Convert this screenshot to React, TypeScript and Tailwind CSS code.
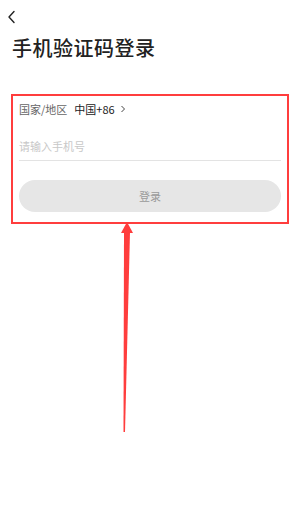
import React from 'react';

const App: React.FC = () => {
    return (
        <div
            className="relative w-[300px] h-[521px] bg-white overflow-hidden"
            style={{ fontFamily: '"Noto Sans CJK SC", "Noto Sans", sans-serif' }}
        >
            {/* Back */}
            <div className="h-[34px] pl-[7px] pt-[10px]">
                <svg width="9" height="14" viewBox="0 0 9 14" fill="none">
                    <path d="M7 1.5 L2 7 L7 12.5" stroke="#222" strokeWidth="1.4" strokeLinecap="round" strokeLinejoin="round" />
                </svg>
            </div>

            {/* Title */}
            <h1 className="pl-[12px] text-[20px] leading-[28px] font-medium text-[#222] tracking-[0.5px]">手机验证码登录</h1>

            {/* Form, highlighted */}
            <div className="mt-[32px] mx-[11px] border-2 border-[#ff3d3d] px-[6px] pt-[4px] pb-[10px]">
                <div className="flex items-center h-[18px] text-[11px]">
                    <span className="text-[#666]">国家/地区</span>
                    <span className="ml-[7px] text-[#222]">中国+86</span>
                    <svg className="ml-[5px]" width="6" height="8" viewBox="0 0 6 8" fill="none">
                        <path d="M1.5 1 L4.5 4 L1.5 7" stroke="#444" strokeWidth="1" />
                    </svg>
                </div>

                <div className="mt-[15px] h-[28px] flex items-center border-b border-[#e3e3e3] text-[11px] text-[#c8c8c8]">
                    请输入手机号
                </div>

                <button className="mt-[19px] w-full h-[32px] rounded-full bg-[#e6e6e6] text-[11px] text-[#9a9a9a]">
                    登录
                </button>
            </div>

            {/* Annotation arrow */}
            <svg className="absolute left-0 top-0" width="300" height="521" viewBox="0 0 300 521">
                <polygon points="127,222 121,233 133,233" fill="#ff3d3d" />
                <polygon points="124,232 130,232 125,432 123.5,432" fill="#ff3d3d" />
            </svg>
        </div>
    );
};

export default App;
